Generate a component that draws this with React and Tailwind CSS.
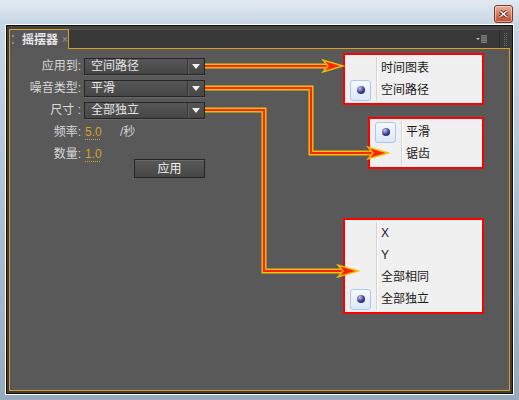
import React from "react";

/* arrow annotations, coords relative to the panel body */
const arrows = [
  { pts: [[195, 17], [333, 17]] },
  { pts: [[195, 39], [301, 39], [301, 104], [378, 104]] },
  { pts: [[195, 61], [254, 61], [254, 222], [348, 222]] },
];

function Dropdown({ value }) {
  return (
    <div className="ml-[3px] flex h-[17px] w-[121px] items-center border border-[#262626] bg-gradient-to-b from-[#565656] to-[#464646] shadow-[0_1px_0_#666]">
      <span className="flex-1 pl-[6px] text-[12px] leading-none text-[#e4e4e4]">{value}</span>
      <span className="h-full w-px bg-[#363636] shadow-[1px_0_0_#5f5f5f]" />
      <span className="flex w-[16px] justify-center">
        <svg width="8" height="5" viewBox="0 0 8 5">
          <path d="M0 0 L8 0 L4 5 Z" fill="#f0f0f0" />
        </svg>
      </span>
    </div>
  );
}

function Row({ label, children }) {
  return (
    <div className="flex h-[22px] items-center">
      <span className="w-[71px] whitespace-pre text-right text-[12px] leading-none text-[#d8d8d8]">{label}</span>
      {children}
    </div>
  );
}

function Radio() {
  return (
    <div className="ml-[3px] flex h-[21px] w-[21px] items-center justify-center rounded-[3px] border border-[#aac7ee] bg-gradient-to-b from-[#f6f9fe] to-[#dde8f8]">
      <div className="h-[8px] w-[8px] rounded-full bg-[radial-gradient(circle_at_35%_30%,#c4c4f4,#3b3b8e_55%,#14144a)]" />
    </div>
  );
}

function Popup({ items, selected, className }) {
  return (
    <div className={"absolute border-2 border-[#ff0000] bg-[#f0f0f0] p-[2px] " + className}>
      <div className="relative flex flex-col">
        <div className="absolute top-0 bottom-0 left-[29px] w-px bg-[#d3d3d3] shadow-[1px_0_0_#ffffff]" />
        {items.map((it, i) => (
          <div key={it} className="flex h-[22px] items-center">
            <div className="flex w-[30px] items-center">{i === selected && <Radio />}</div>
            <span className="pl-[4px] text-[12px] leading-none text-[#1a1a1a]">{it}</span>
          </div>
        ))}
      </div>
    </div>
  );
}

function Arrow({ pts }) {
  const [tx, ty] = pts[pts.length - 1];
  const line = pts
    .slice(0, -1)
    .concat([[tx - 14, ty]])
    .map((p) => p.join(","))
    .join(" ");
  const head = `${tx},${ty} ${tx - 20},${ty - 6} ${tx - 15},${ty} ${tx - 20},${ty + 6}`;
  return (
    <g>
      <polyline points={line} fill="none" stroke="#efbf0a" strokeWidth="5" strokeLinejoin="miter" />
      <polyline points={line} fill="none" stroke="#ff2400" strokeWidth="2.2" strokeLinejoin="miter" />
      <polygon points={head} fill="#ff2400" stroke="#f0c000" strokeWidth="1.4" strokeLinejoin="miter" />
    </g>
  );
}

export default function App() {
  return (
    <div className="flex h-[400px] w-[519px] flex-col overflow-hidden bg-[linear-gradient(180deg,#e1eaf2_0%,#c8d7e5_6%,#a9bbce_60%,#97a9bd_100%)] font-['Liberation_Sans','Noto_Sans_CJK_SC',sans-serif]">
      {/* title bar */}
      <div className="flex h-[24px] justify-end pt-[5px] pr-[6px]">
        <div className="flex h-[18px] w-[19px] items-center justify-center rounded-[3px] border border-[#7a3a2a] bg-gradient-to-b from-[#eeb19c] via-[#d97a5f] to-[#c24a30] shadow-[inset_0_0_0_1px_rgba(255,255,255,0.45)]">
          <svg width="9" height="8" viewBox="0 0 9 8">
            <path d="M1 1 L8 7 M8 1 L1 7" stroke="#4a1a10" strokeWidth="3" />
            <path d="M1 1 L8 7 M8 1 L1 7" stroke="#ffffff" strokeWidth="1.6" />
          </svg>
        </div>
      </div>

      {/* window frame */}
      <div className="ml-[5px] h-[371px] w-[509px] border border-white">
        <div className="h-full border border-[#101010] bg-[#3c3c3c] px-[2px] pb-[2px]">
          {/* tab strip */}
          <div className="flex h-[23px] items-end bg-[#444444]">
            <div className="flex h-[20px] w-[60px] items-center border-x border-t border-[#dba01e] bg-[#575757] pl-[2px]">
              <div className="flex flex-col gap-[5px]">
                <span className="h-[2px] w-[2px] bg-[#8a8a8a]" />
                <span className="h-[2px] w-[2px] bg-[#8a8a8a]" />
              </div>
              <span className="ml-[8px] text-[12px] font-bold leading-none text-[#e6e6e6]">摇摆器</span>
              <span className="ml-[4px] text-[10px] leading-none text-[#9a9a9a]">×</span>
            </div>
            <div className="flex h-[20px] flex-1 items-center justify-end border-t border-b border-t-[#4f4f4f] border-b-[#dba01e] bg-[#393939]">
              <svg width="11" height="8" viewBox="0 0 11 8" className="mr-[12px]">
                <path d="M0 3 L4 3 L2 5 Z" fill="#bdbdbd" />
                <rect x="5" y="0" width="6" height="8" fill="#7c7c7c" />
                <path d="M5 1.5 H11 M5 4 H11 M5 6.5 H11" stroke="#5a5a5a" strokeWidth="1" />
              </svg>
              <span className="h-full w-px bg-[#2c2c2c]" />
              <div className="flex w-[10px] justify-center gap-[1px]">
                <span className="h-[13px] w-px border-l border-dotted border-[#6e6e6e]" />
                <span className="h-[13px] w-px border-l border-dotted border-[#6e6e6e]" />
              </div>
            </div>
          </div>

          {/* panel body */}
          <div className="relative h-[342px] border-x border-b border-[#dba01e] bg-[#595959]">
            <div className="flex flex-col pt-[6px]">
              <Row label="应用到:">
                <Dropdown value="空间路径" />
              </Row>
              <Row label="噪音类型:">
                <Dropdown value="平滑" />
              </Row>
              <Row label="尺寸 :">
                <Dropdown value="全部独立" />
              </Row>
              <Row label="频率:">
                <span className="ml-[4px] w-[35px] text-[12px] leading-none text-[#d8a21f] underline decoration-dotted underline-offset-[3px]">5.0</span>
                <span className="text-[12px] leading-none text-[#cfcfcf]">/秒</span>
              </Row>
              <Row label="数量:">
                <span className="ml-[4px] text-[12px] leading-none text-[#d8a21f] underline decoration-dotted underline-offset-[3px]">1.0</span>
              </Row>
              <button className="ml-[124px] -mt-[6px] flex h-[19px] w-[71px] items-center justify-center border border-[#252525] bg-gradient-to-b from-[#585858] to-[#474747] text-[12px] leading-none text-[#f2f2f2] shadow-[inset_0_1px_0_#6a6a6a]">
                应用
              </button>
            </div>

            <Popup items={["时间图表", "空间路径"]} selected={1} className="left-[333px] top-[4px] w-[141px]" />
            <Popup items={["平滑", "锯齿"]} selected={0} className="left-[358px] top-[68px] w-[116px]" />
            <Popup items={["X", "Y", "全部相同", "全部独立"]} selected={3} className="left-[333px] top-[169px] w-[141px]" />

            <svg className="pointer-events-none absolute inset-0" width="499" height="341" viewBox="0 0 499 341">
              {arrows.map((a, i) => (
                <Arrow key={i} pts={a.pts} />
              ))}
            </svg>
          </div>
        </div>
      </div>
    </div>
  );
}
